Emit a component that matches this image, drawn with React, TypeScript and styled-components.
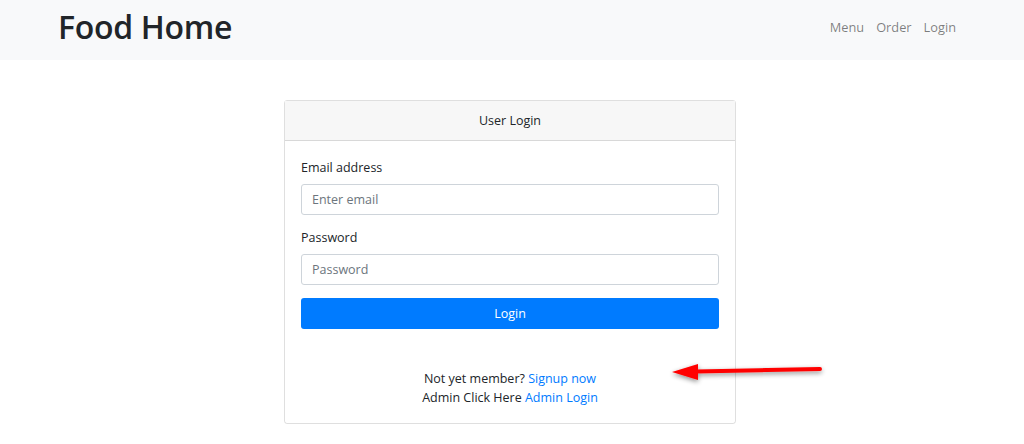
import React from "react";
import styled, { createGlobalStyle } from "styled-components";

const Global = createGlobalStyle`
  html, body { margin: 0; padding: 0; background: #fff; }
  body { font-family: "Open Sans", "Noto Sans", sans-serif; color: #212529; font-size: 12.5px; }
  * { box-sizing: border-box; }
`;

const Page = styled.div`
  position: relative;
  width: 1024px;
  height: 444px;
  overflow: hidden;
`;

const Header = styled.header`
  height: 60px;
  background: #f8f9fa;
  display: flex;
  align-items: center;
  justify-content: space-between;
  padding: 0 68px 0 58px;
`;

const Brand = styled.div`
  font-size: 32px;
  font-weight: 600;
  color: #212529;
  line-height: 1;
  margin-top: -6px;
  letter-spacing: -0.3px;
`;

const Nav = styled.nav`
  display: flex;
  gap: 12px;
  margin-top: -6px;
`;

const NavLink = styled.a`
  color: rgba(0, 0, 0, 0.5);
  font-size: 12.8px;
  text-decoration: none;
`;

const Card = styled.section`
  margin: 40px 0 0 284px;
  width: 452px;
  border: 1px solid rgba(0, 0, 0, 0.125);
  border-radius: 3px;
`;

const CardHeader = styled.div`
  height: 40px;
  background: #f7f7f7;
  border-bottom: 1px solid rgba(0, 0, 0, 0.125);
  display: flex;
  align-items: center;
  justify-content: center;
  color: #212529;
`;

const CardBody = styled.div`
  padding: 17px 16px 16px;
  display: flex;
  flex-direction: column;
`;

const Group = styled.div<{ $mb: number }>`
  display: flex;
  flex-direction: column;
  margin-bottom: ${(p) => p.$mb}px;
`;

const Label = styled.label`
  line-height: 20px;
  margin-bottom: 6px;
  color: #212529;
`;

const Input = styled.input`
  height: 31px;
  border: 1px solid #ced4da;
  border-radius: 3px;
  padding: 0 10px;
  font-family: inherit;
  font-size: 12.5px;
  color: #495057;
  &::placeholder { color: #6c757d; }
`;

const Button = styled.button`
  height: 31px;
  border: none;
  border-radius: 3px;
  background: #007bff;
  color: #fff;
  font-family: inherit;
  font-size: 12.5px;
  font-weight: 500;
`;

const Footer = styled.div`
  margin-top: 40px;
  text-align: center;
  line-height: 19px;
  color: #212529;
`;

const Link = styled.a`
  color: #007bff;
  text-decoration: none;
`;

const Arrow = styled.svg`
  position: absolute;
  left: 660px;
  top: 352px;
`;

export default function App() {
  return (
    <Page>
      <Global />
      <Header>
        <Brand>Food Home</Brand>
        <Nav>
          <NavLink>Menu</NavLink>
          <NavLink>Order</NavLink>
          <NavLink>Login</NavLink>
        </Nav>
      </Header>
      <Card>
        <CardHeader>User Login</CardHeader>
        <CardBody>
          <Group $mb={13}>
            <Label>Email address</Label>
            <Input placeholder="Enter email" />
          </Group>
          <Group $mb={13}>
            <Label>Password</Label>
            <Input placeholder="Password" type="password" />
          </Group>
          <Button>Login</Button>
          <Footer>
            <div>
              Not yet member? <Link>Signup now</Link>
            </div>
            <div>
              Admin Click Here <Link>Admin Login</Link>
            </div>
          </Footer>
        </CardBody>
      </Card>
      <Arrow width="180" height="40" viewBox="0 0 180 40">
        <defs>
          <filter id="sh" x="-20%" y="-60%" width="140%" height="220%">
            <feGaussianBlur in="SourceAlpha" stdDeviation="2.5" />
            <feOffset dx="0" dy="2" />
            <feComponentTransfer>
              <feFuncA type="linear" slope="0.45" />
            </feComponentTransfer>
            <feMerge>
              <feMergeNode />
              <feMergeNode in="SourceGraphic" />
            </feMerge>
          </filter>
        </defs>
        <g filter="url(#sh)">
          <line x1="36" y1="19.5" x2="160" y2="17" stroke="#ff0000" strokeWidth="4" strokeLinecap="round" />
          <polygon points="12,20 38,12 38,28" fill="#ff0000" />
        </g>
      </Arrow>
    </Page>
  );
}
